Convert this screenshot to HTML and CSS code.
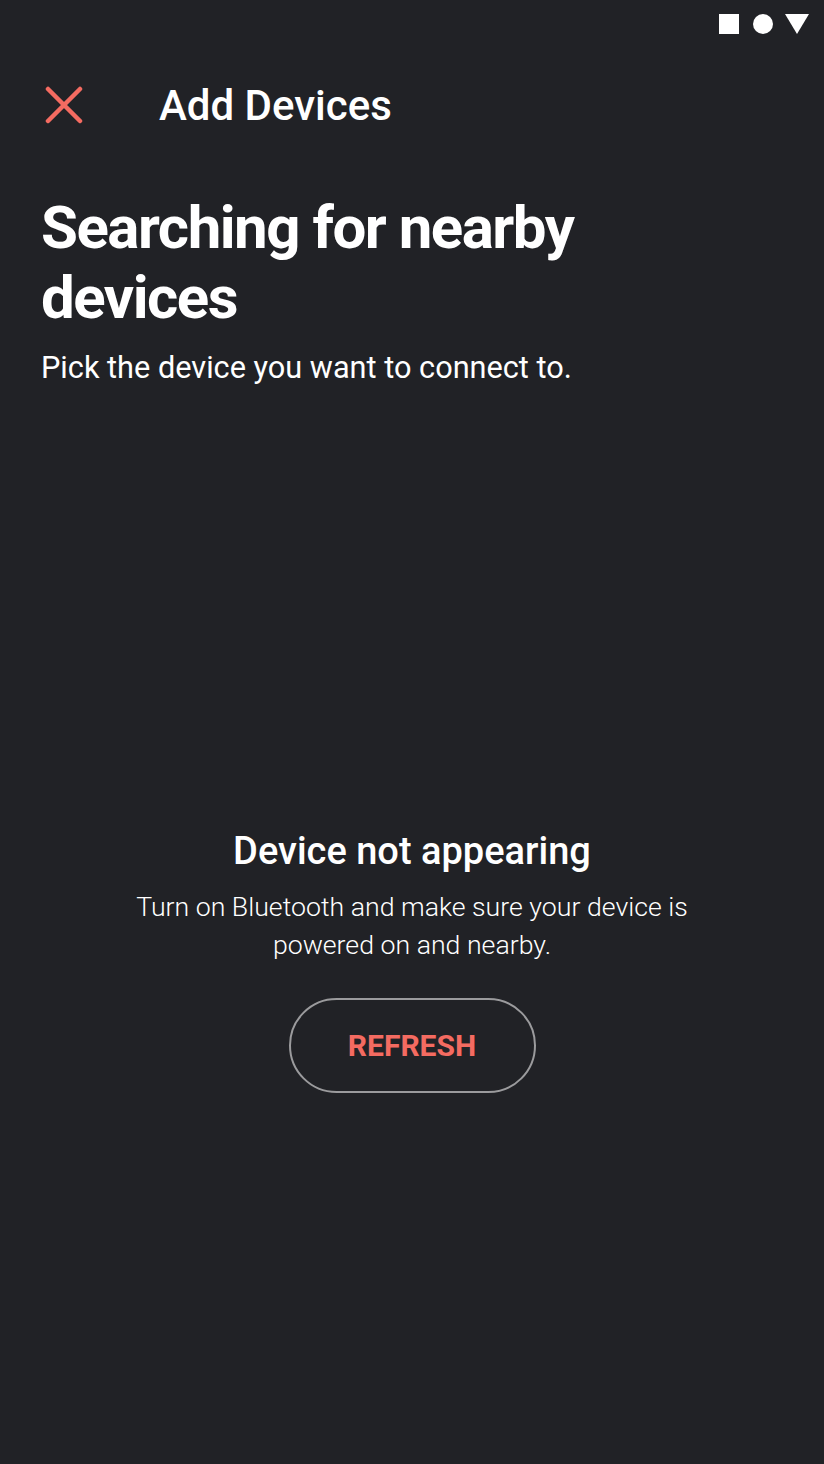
FILE: index.html
```html
<!DOCTYPE html>
<html>
<head>
<meta charset="utf-8">
<link rel="stylesheet" href="styles.css">
</head>
<body>
<div class="screen">
  <div class="statusbar">
    <span class="sb-square"></span>
    <span class="sb-circle"></span>
    <svg class="sb-tri" width="24" height="20" viewBox="0 0 24 20"><polygon points="0,0 24,0 12,20" fill="#fff"/></svg>
  </div>
  <div class="toolbar">
    <svg class="close" width="38" height="38" viewBox="0 0 38 38"><path d="M3 3 L35 35 M35 3 L3 35" stroke="#f46b61" stroke-width="4.5" stroke-linecap="round"/></svg>
    <div class="toolbar-title">Add Devices</div>
  </div>
  <div class="intro">
    <h1 class="headline">Searching for nearby devices</h1>
    <p class="sub">Pick the device you want to connect to.</p>
  </div>
  <div class="empty">
    <h2 class="empty-title">Device not appearing</h2>
    <p class="empty-text">Turn on Bluetooth and make sure your device is powered on and nearby.</p>
    <button class="refresh">REFRESH</button>
  </div>
</div>
</body>
</html>
```

FILE: styles.css
```css
html, body {
  margin: 0;
  padding: 0;
  background: #212226;
}
.screen {
  width: 824px;
  height: 1464px;
  background: #212226;
  font-family: Roboto, "Noto Sans", sans-serif;
  color: #fff;
  display: flex;
  flex-direction: column;
}
.statusbar {
  height: 48px;
  display: flex;
  justify-content: flex-end;
  align-items: flex-start;
  gap: 14px;
  padding: 14px 15px 0 0;
  box-sizing: border-box;
}
.sb-square {
  width: 20px;
  height: 20px;
  background: #fff;
}
.sb-circle {
  width: 20px;
  height: 20px;
  border-radius: 50%;
  background: #fff;
}
.sb-tri {
  margin-left: -2px;
}
.toolbar {
  height: 114px;
  display: flex;
  align-items: center;
  padding-left: 45px;
  box-sizing: border-box;
}
.close {
  flex: none;
}
.toolbar-title {
  margin-left: 76px;
  font-size: 42px;
  font-weight: 500;
  letter-spacing: 0;
}
.intro {
  padding: 31px 41px 0;
}
.headline {
  margin: 0;
  font-size: 60px;
  font-weight: 700;
  line-height: 70px;
  letter-spacing: -1.5px;
  max-width: 620px;
}
.sub {
  margin: 15px 0 0;
  font-size: 30.7px;
  line-height: 40px;
  font-weight: 400;
}
.empty {
  margin-top: 438px;
  display: flex;
  flex-direction: column;
  align-items: center;
  text-align: center;
}
.empty-title {
  margin: 0;
  font-size: 38px;
  font-weight: 500;
  line-height: 50px;
}
.empty-text {
  margin: 12px 0 0;
  width: 560px;
  font-size: 26.7px;
  font-weight: 300;
  line-height: 38px;
}
.refresh {
  margin-top: 34px;
  width: 247px;
  height: 95px;
  border: 2px solid #9b9b9d;
  border-radius: 48px;
  background: transparent;
  color: #f46b61;
  font-family: Roboto, sans-serif;
  font-size: 30px;
  font-weight: 700;
  letter-spacing: 0;
  cursor: pointer;
}
```
